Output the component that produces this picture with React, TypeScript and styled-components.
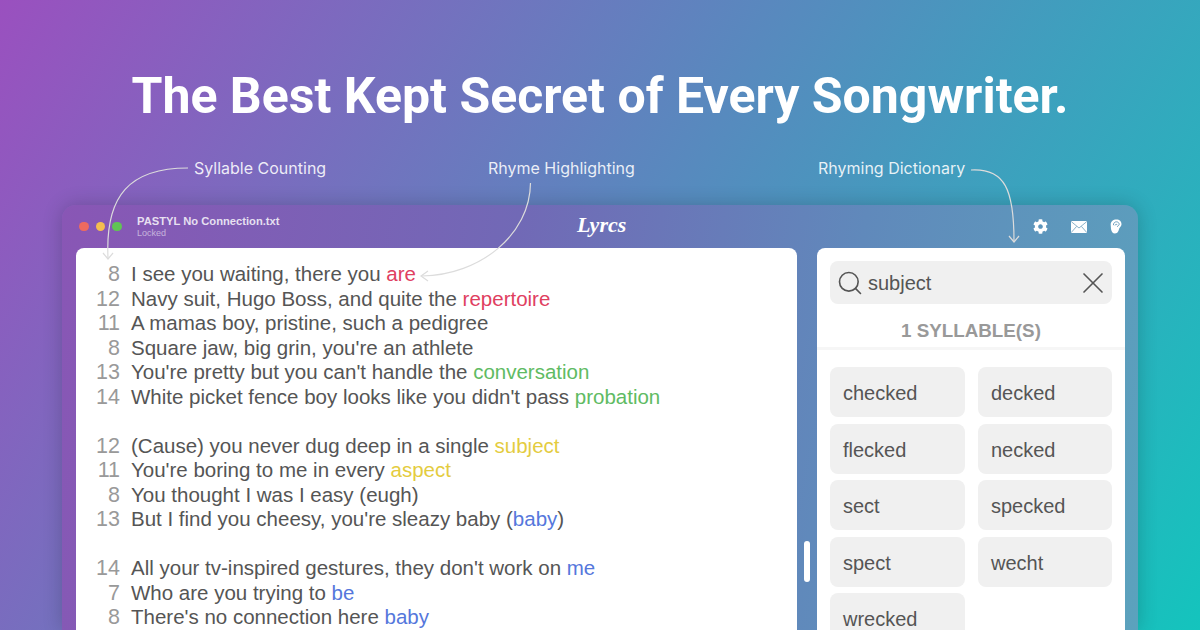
import styled, { createGlobalStyle } from 'styled-components';
import { Search, X } from 'lucide-react';
import { FaCog } from 'react-icons/fa';

const GlobalStyle = createGlobalStyle`
    html, body {
        margin: 0;
        padding: 0;
        width: 1200px;
        height: 630px;
        overflow: hidden;
    }
`;

const Page = styled.div`
    position: relative;
    width: 1200px;
    height: 630px;
    overflow: hidden;
    display: flex;
    flex-direction: column;
    background: linear-gradient(122deg, #9a50bf 0%, #14c4bd 100%);
    font-family: 'Liberation Sans', Arial, sans-serif;
`;

const Headline = styled.h1`
    flex: none;
    margin: 0;
    padding-top: 66px;
    height: 60px;
    text-align: center;
    font-family: Roboto, sans-serif;
    font-weight: 700;
    font-size: 50px;
    line-height: 60px;
    color: #fff;
`;

const Annotations = styled.div`
    flex: none;
    display: flex;
    padding: 33px 0 0 194px;
    height: 46px;
`;

const Annotation = styled.span<{ $width: number }>`
    width: ${({ $width }) => $width}px;
    font-family: Inter, sans-serif;
    font-size: 16px;
    line-height: 18px;
    color: rgba(255, 255, 255, 0.88);
`;

const Window = styled.div`
    flex: 1;
    min-height: 0;
    margin: 0 62px;
    padding: 0 13px 0 14px;
    border-radius: 14px 14px 0 0;
    background: linear-gradient(100deg, #8956b5 0%, #7169b6 40%, #6089bb 70%, #5ba2bd 100%);
    box-shadow: 0 0 20px rgba(0, 0, 0, 0.2);
    display: flex;
    flex-direction: column;
`;

const TitleBar = styled.div`
    flex: none;
    height: 43px;
    display: flex;
    align-items: center;
    position: relative;
`;

const Lights = styled.div`
    display: flex;
    gap: 7px;
    padding-left: 3px;
    width: 58px;
`;

const Light = styled.span<{ $color: string }>`
    width: 9.5px;
    height: 9.5px;
    border-radius: 50%;
    background: ${({ $color }) => $color};
`;

const FileInfo = styled.div`
    display: flex;
    flex-direction: column;
    margin-top: 1px;
`;

const FileName = styled.span`
    font-weight: 700;
    font-size: 11.2px;
    line-height: 13px;
    color: rgba(255, 255, 255, 0.82);
`;

const FileStatus = styled.span`
    font-size: 9px;
    line-height: 11px;
    color: rgba(255, 255, 255, 0.55);
`;

const Logo = styled.span`
    position: absolute;
    left: 501px;
    top: 2px;
    font-family: 'Liberation Serif', serif;
    font-style: italic;
    font-weight: 700;
    font-size: 22px;
    line-height: 36px;
    color: #fff;
`;

const Tools = styled.div`
    margin-left: auto;
    display: flex;
    align-items: center;
    gap: 23px;
    padding-right: 3px;
    color: #fff;
`;

const Panels = styled.div`
    flex: 1;
    display: flex;
    min-height: 0;
`;

const Editor = styled.div`
    width: 721px;
    box-sizing: border-box;
    padding-top: 14px;
    background: #fff;
    border-radius: 8px 8px 0 0;
    overflow: hidden;
`;

const Line = styled.div`
    display: flex;
    height: 24.5px;
    font-size: 20.5px;
    line-height: 24.5px;
    color: #555;
`;

const Count = styled.span`
    width: 44px;
    margin-right: 11px;
    text-align: right;
    font-size: 21.5px;
    color: #999;
`;

const Rhyme = styled.span<{ $color: string }>`
    color: ${({ $color }) => $color};
`;

const Gutter = styled.div`
    width: 20px;
    display: flex;
    justify-content: center;
    padding-top: 293px;
`;

const ScrollThumb = styled.div`
    width: 6px;
    height: 41px;
    border-radius: 3px;
    background: #fff;
`;

const Sidebar = styled.div`
    width: 308px;
    background: #fff;
    border-radius: 8px 8px 0 0;
    overflow: hidden;
`;

const SearchBox = styled.div`
    margin: 13px 13px 0;
    height: 43px;
    padding: 0 1px 0 6px;
    display: flex;
    align-items: center;
    gap: 4px;
    background: #f0f0f0;
    border-radius: 8px;
    font-size: 20px;
    color: #555;
`;

const SearchText = styled.span`
    flex: 1;
    padding-top: 2px;
`;

const SectionTitle = styled.div`
    height: 43px;
    border-bottom: 3px solid #f6f6f6;
    text-align: center;
    font-weight: 700;
    font-size: 18.8px;
    line-height: 53px;
    color: #999;
`;

const ChipGrid = styled.div`
    display: grid;
    grid-template-columns: 135px 134px;
    grid-auto-rows: 50px;
    column-gap: 13px;
    row-gap: 6.6px;
    padding: 17px 13px 0;
`;

const Chip = styled.div`
    padding-left: 13px;
    background: #f0f0f0;
    border-radius: 8px;
    font-size: 20px;
    line-height: 52px;
    color: #555;
`;

const ArrowLayer = styled.svg`
    position: absolute;
    inset: 0;
    pointer-events: none;
`;

const RED = '#e0405f';
const GREEN = '#60bb63';
const YELLOW = '#e4cc3f';
const BLUE = '#5577dc';

type LyricLine = { count?: number; text?: string; rhyme?: string; color?: string; tail?: string };

const lyrics: LyricLine[] = [
    { count: 8, text: 'I see you waiting, there you ', rhyme: 'are', color: RED },
    { count: 12, text: 'Navy suit, Hugo Boss, and quite the ', rhyme: 'repertoire', color: RED },
    { count: 11, text: 'A mamas boy, pristine, such a pedigree' },
    { count: 8, text: "Square jaw, big grin, you're an athlete" },
    { count: 13, text: "You're pretty but you can't handle the ", rhyme: 'conversation', color: GREEN },
    { count: 14, text: "White picket fence boy looks like you didn't pass ", rhyme: 'probation', color: GREEN },
    {},
    { count: 12, text: '(Cause) you never dug deep in a single ', rhyme: 'subject', color: YELLOW },
    { count: 11, text: "You're boring to me in every ", rhyme: 'aspect', color: YELLOW },
    { count: 8, text: 'You thought I was I easy (eugh)' },
    { count: 13, text: "But I find you cheesy, you're sleazy baby (", rhyme: 'baby', color: BLUE, tail: ')' },
    {},
    { count: 14, text: "All your tv-inspired gestures, they don't work on ", rhyme: 'me', color: BLUE },
    { count: 7, text: 'Who are you trying to ', rhyme: 'be', color: BLUE },
    { count: 8, text: "There's no connection here ", rhyme: 'baby', color: BLUE },
];

const words = ['checked', 'decked', 'flecked', 'necked', 'sect', 'specked', 'spect', 'wecht', 'wrecked'];

const MailIcon = () => (
    <svg width="16" height="12" viewBox="0 0 16 12">
        <rect width="16" height="12" rx="1.2" fill="#fff" />
        <path d="M.5.8 8 7 15.5.8M.5 11.2 5.6 5.4M15.5 11.2 10.4 5.4" fill="none" stroke="#6f9fbd" strokeWidth="0.8" />
    </svg>
);

const EarIcon = () => (
    <svg width="12" height="15" viewBox="0 0 12 15">
        <path
            d="M6.5.5C9.5.5 11.5 2.5 11.5 5.3 11.5 7.3 10 8 9.2 9.5 8.6 11.5 8 14.5 5 14.5 2.5 14.5 1.5 12.5 1 10L.7 6C.5 2.5 3 .5 6.5.5Z"
            fill="#fff"
        />
        <path
            d="M3.4 6.2C3.4 3.8 5 2.8 6.5 2.8 8 2.8 9.2 4 9.2 5.3 9.2 6.5 7.8 6.8 7.2 7.9M5 6.4C5.4 5 7 5 7.2 6.2"
            fill="none"
            stroke="#6a9dbd"
            strokeWidth="1"
        />
    </svg>
);

export default function App() {
    return (
        <Page>
            <GlobalStyle />
            <Headline>The Best Kept Secret of Every Songwriter.</Headline>
            <Annotations>
                <Annotation $width={294}>Syllable Counting</Annotation>
                <Annotation $width={330}>Rhyme Highlighting</Annotation>
                <Annotation $width={160}>Rhyming Dictionary</Annotation>
            </Annotations>
            <Window>
                <TitleBar>
                    <Lights>
                        <Light $color="#ee6a5f" />
                        <Light $color="#f5bd4f" />
                        <Light $color="#61c454" />
                    </Lights>
                    <FileInfo>
                        <FileName>PASTYL No Connection.txt</FileName>
                        <FileStatus>Locked</FileStatus>
                    </FileInfo>
                    <Logo>Lyrcs</Logo>
                    <Tools>
                        <FaCog size={15} />
                        <MailIcon />
                        <EarIcon />
                    </Tools>
                </TitleBar>
                <Panels>
                    <Editor>
                        {lyrics.map((line, index) => (
                            <Line key={index}>
                                <Count>{line.count}</Count>
                                <span>
                                    {line.text}
                                    {line.rhyme && <Rhyme $color={line.color ?? '#555'}>{line.rhyme}</Rhyme>}
                                    {line.tail}
                                </span>
                            </Line>
                        ))}
                    </Editor>
                    <Gutter>
                        <ScrollThumb />
                    </Gutter>
                    <Sidebar>
                        <SearchBox>
                            <Search size={28} strokeWidth={1.4} />
                            <SearchText>subject</SearchText>
                            <X size={36} strokeWidth={1.1} />
                        </SearchBox>
                        <SectionTitle>1 SYLLABLE(S)</SectionTitle>
                        <ChipGrid>
                            {words.map(word => (
                                <Chip key={word}>{word}</Chip>
                            ))}
                        </ChipGrid>
                    </Sidebar>
                </Panels>
            </Window>
            <ArrowLayer width="1200" height="630" fill="none" stroke="#dcdcdc" strokeWidth="1.2">
                <path d="M188 168C130 168 105 195 108 258" />
                <path d="M103 253 108 259 113 253" />
                <path d="M530.5 183C530 235 480 275 422 276" />
                <path d="M428 271 421 276 428 281" />
                <path d="M971 170C1005 168 1014 190 1014 241" />
                <path d="M1009 236 1014 242 1019 236" />
            </ArrowLayer>
        </Page>
    );
}
